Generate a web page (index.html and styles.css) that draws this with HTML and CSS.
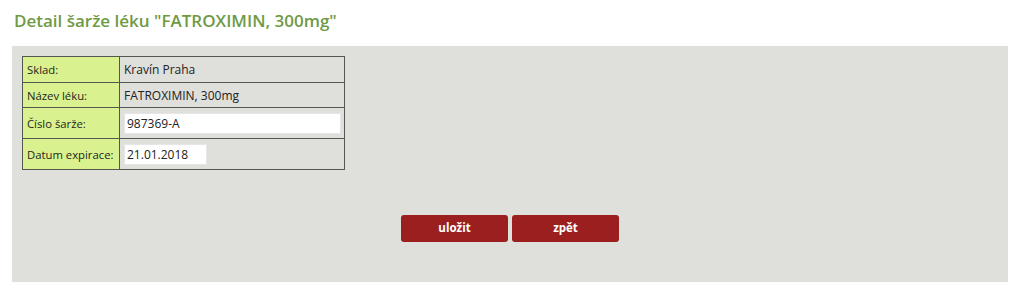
FILE: index.html
```html
<!DOCTYPE html>
<html lang="cs">
<head>
<meta charset="utf-8">
<title>Detail šarže léku</title>
<link rel="stylesheet" href="styles.css">
</head>
<body>
<h1 class="title">Detail šarže léku "FATROXIMIN, 300mg"</h1>
<div class="panel">
  <table class="detail">
    <tr class="r1">
      <th>Sklad:</th>
      <td>Kravín Praha</td>
    </tr>
    <tr class="r2">
      <th>Název léku:</th>
      <td>FATROXIMIN, 300mg</td>
    </tr>
    <tr class="r3">
      <th>Číslo šarže:</th>
      <td><input class="field field-wide" type="text" value="987369-A"></td>
    </tr>
    <tr class="r4">
      <th>Datum expirace:</th>
      <td><input class="field field-date" type="text" value="21.01.2018"></td>
    </tr>
  </table>
  <div class="actions">
    <button class="btn" type="button">uložit</button>
    <button class="btn" type="button">zpět</button>
  </div>
</div>
</body>
</html>
```

FILE: styles.css
```css
html, body {
  margin: 0;
  padding: 0;
  background: #ffffff;
  font-family: "Open Sans", "DejaVu Sans", sans-serif;
  color: #222;
}

.title {
  margin: 9px 0 0 14px;
  font-size: 17px;
  line-height: 23px;
  font-weight: 600;
  color: #6f9a45;
}

.panel {
  margin: 14px 15px 0 12px;
  width: 996px;
  height: 236px;
  box-sizing: border-box;
  background: #dfdfdb;
  padding: 10px 0 0 10px;
}

.detail {
  border-collapse: collapse;
  table-layout: fixed;
  width: 323px;
  font-size: 12px;
}

.detail th,
.detail td {
  border: 1px solid #555552;
  padding: 0 4px;
  text-align: left;
  vertical-align: middle;
  font-weight: 400;
  white-space: nowrap;
  overflow: hidden;
}

.detail th {
  background: #d9f28f;
  width: 88px;
  font-size: 11.3px;
  color: #1e1e1e;
}

.detail td {
  color: #222;
}

.r1 { height: 26px; }
.r2 { height: 25px; }
.r3 { height: 31px; }
.r4 { height: 31px; }

.field {
  display: block;
  box-sizing: border-box;
  height: 21px;
  border: 1px solid #e6e6e6;
  background: #ffffff;
  font-family: "Open Sans", "DejaVu Sans", sans-serif;
  font-size: 12px;
  color: #222;
  padding: 0 2px 0 2px;
  margin: 0;
}

.field-wide { width: 217px; }
.field-date { width: 83px; }

.actions {
  display: flex;
  justify-content: center;
  gap: 4px;
  margin: 45px 10px 0 0;
}

.btn {
  width: 107px;
  height: 27px;
  border: 0;
  border-radius: 3px;
  background: #9c1f1f;
  color: #ffffff;
  font-family: "Open Sans", "DejaVu Sans", sans-serif;
  font-size: 11.5px;
  font-weight: 700;
  padding: 0 0 3px 0;
}
```
